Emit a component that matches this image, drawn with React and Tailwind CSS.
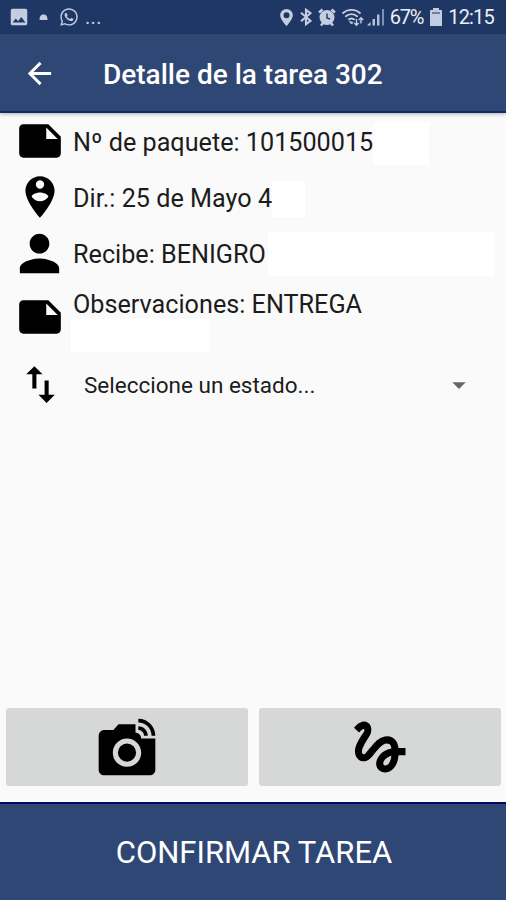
import React from 'react';
import {
  MdArrowBack,
  MdArrowDropDown,
  MdGesture,
  MdImportExport,
  MdLinkedCamera,
  MdNote,
  MdPerson,
  MdPersonPinCircle,
  MdPhoto,
} from 'react-icons/md';
import { FaWhatsapp } from 'react-icons/fa';

const details = [
  {
    id: 'package',
    icon: <MdNote size={50} />,
    label: 'Nº de paquete:',
    value: '101500015',
    mask: 'w-[56px] h-[43px] mt-1',
  },
  {
    id: 'address',
    icon: <MdPersonPinCircle size={50} />,
    label: 'Dir.:',
    value: '25 de Mayo 4',
    mask: 'w-[33px] h-[36px] mt-1',
  },
  {
    id: 'receiver',
    icon: <MdPerson size={59} className="mr-[2px]" />,
    label: 'Recibe:',
    value: 'BENIGRO',
    mask: 'ml-[2px] w-[226px] h-[44px] mt-[2px]',
  },
];

function BluetoothIcon() {
  return (
    <svg width="12" height="18" viewBox="0 0 12 18" fill="none" stroke="#c3cde0" strokeWidth="2.100">
      <path d="M1 4.800l9.500 8L6 16.200V1.800l4.500 3.400-9.500 8" />
    </svg>
  );
}

function AlarmIcon() {
  return (
    <svg width="18" height="19" viewBox="0 0 18 19" fill="none">
      <circle cx="9" cy="9.5" r="7.5" fill="#c3cde0" />
      <path d="M1 4.500l3.500-3M17 4.500l-3.500-3M3 17.500l2.500-3M15 17.500l-2.500-3" stroke="#c3cde0" strokeWidth="2.600" />
      <path d="M9 5.500v4.500l3 1" stroke="#1f3764" strokeWidth="1.400" />
    </svg>
  );
}

function WifiIcon() {
  return (
    <svg width="24" height="19" viewBox="0 0 24 19" fill="none" stroke="#c3cde0" strokeWidth="1.900">
      <path d="M1.500 5.500C6.500 .7 14.500 .7 19.500 5.500M4.300 8.700c3.700-3.300 8.700-3.300 12.400 0M7.300 11.800c2-1.600 4.400-1.600 6.400 0" />
      <path d="M8.500 13.500L10.500 16l1.500-1.500z" fill="#c3cde0" strokeWidth="1" />
      <path d="M15.500 11v6M13.300 15l2.200 2.200 2.200-2.200M20 15.500v-6M17.800 12L20 9.800l2.200 2.200" strokeWidth="1.400" />
    </svg>
  );
}

function SignalIcon() {
  return (
    <svg width="18" height="18" viewBox="0 0 18 18">
      <path d="M0 17.500h3.500v-3.500z" fill="#c3cde0" />
      <path d="M5.500 11h2.500v6.500h-2.500zM10 6.500h2.500v11h-2.500z" fill="#b3bfd6" />
      <path d="M15 1h2v16.500h-2z" fill="#8090b2" />
    </svg>
  );
}

function StatusBar() {
  return (
    <div className="flex h-[34px] shrink-0 items-center justify-between bg-[#1f3764] pl-2 pr-3 text-[#c3cde0]">
      <div className="flex items-center">
        <MdPhoto size={22} />
        <svg className="ml-[9px]" width="9" height="6" viewBox="0 0 9 6">
          <path d="M.5 6C.5 2 2 .5 4.500 .5S8.500 2 8.500 6z" fill="currentColor" />
        </svg>
        <FaWhatsapp className="ml-[11px]" size={20} />
        <span className="ml-[6px] text-[20px] leading-none tracking-[0.3px]">...</span>
      </div>
      <div className="flex items-center">
        <svg width="13" height="17" viewBox="0 0 13 17">
          <path
            d="M6.500 0A6.300 6.300 0 0 0 .2 6.300C.2 10.700 6.500 17 6.500 17s6.300-6.300 6.300-10.700A6.300 6.300 0 0 0 6.500 0zm0 3.300a3 3 0 1 1 0 6 3 3 0 0 1 0-6z"
            fill="currentColor"
            fillRule="evenodd"
          />
        </svg>
        <span className="ml-[7px]"><BluetoothIcon /></span>
        <span className="ml-[6px]"><AlarmIcon /></span>
        <span className="ml-[5px]"><WifiIcon /></span>
        <span className="ml-[2px]"><SignalIcon /></span>
        <span className="ml-[5px] text-[20px] leading-none tracking-[-1.2px] text-[#eceff5]">67%</span>
        <svg className="ml-[7px]" width="12" height="18" viewBox="0 0 12 18">
          <path d="M3 0h6v2h3v16H0V2h3z" fill="currentColor" />
          <path d="M2 4h8v2H2z" fill="#6f7fa1" />
        </svg>
        <span className="ml-[6px] text-[20px] leading-none tracking-[-0.8px] text-[#eceff5]">12:15</span>
      </div>
    </div>
  );
}

function DetailRow({ item }) {
  return (
    <div className="flex h-14 items-center">
      <div className="flex w-[80px] shrink-0 justify-center">{item.icon}</div>
      <p className="-ml-[7px] whitespace-nowrap pt-[3px] text-[25.2px] leading-[29px]">
        {item.label} {item.value}
      </p>
      <div className={`shrink-0 bg-white ${item.mask}`} />
    </div>
  );
}

function App() {
  return (
    <div className="flex h-[900px] w-[506px] flex-col overflow-hidden bg-[#fafafa] font-['Roboto',sans-serif] text-[#1c1c1c]">
      <StatusBar />
      <header className="flex h-[79px] shrink-0 items-center border-b-2 border-[#122a66] bg-[#2f4775] text-white shadow-[0_1px_4px_rgba(0,0,0,0.3)]">
        <button className="ml-[22px] pt-px" aria-label="Volver">
          <MdArrowBack size={35} />
        </button>
        <h1 className="ml-[46px] pt-[4px] text-[28px] font-medium leading-8">Detalle de la tarea 302</h1>
      </header>

      <main className="flex flex-1 flex-col [&_svg]:shrink-0">
        <div className="[&_svg]:text-black">
          {details.map(item => (
            <DetailRow key={item.id} item={item} />
          ))}
          <div className="flex h-[72px] items-center">
            <div className="flex w-[80px] shrink-0 justify-center">
              <MdNote size={50} />
            </div>
            <div className="-ml-[7px] pt-[7px]">
              <p className="text-[25.2px] leading-[29px]">Observaciones: ENTREGA</p>
              <div className="-ml-[2px] h-[33px] w-[139px] bg-white" />
            </div>
          </div>
        </div>

        <div className="flex h-16 items-center">
          <div className="flex w-[80px] shrink-0 justify-center pb-px text-black">
            <MdImportExport size={49} />
          </div>
          <button className="flex flex-1 items-center justify-between pb-px pl-1 pr-[31px]">
            <span className="text-[22.5px] leading-7">Seleccione un estado...</span>
            <MdArrowDropDown size={32} className="text-[#666]" />
          </button>
        </div>

        <div className="mb-[16px] mt-auto flex gap-[11px] pl-[6px] pr-[5px] text-black">
          <button className="flex h-[78px] flex-1 items-center justify-center rounded-[3px] bg-[#d6d8d7]" aria-label="Foto">
            <MdLinkedCamera size={68} />
          </button>
          <button className="flex h-[78px] flex-1 items-center justify-center rounded-[3px] bg-[#d6d8d7]" aria-label="Firma">
            <MdGesture size={68} />
          </button>
        </div>
      </main>

      <button className="h-[98px] shrink-0 border-t-2 border-[#07085f] bg-[#2f4775] pl-[2px] pt-[2px] text-[31px] text-white">
        CONFIRMAR TAREA
      </button>
    </div>
  );
}

export default App;
